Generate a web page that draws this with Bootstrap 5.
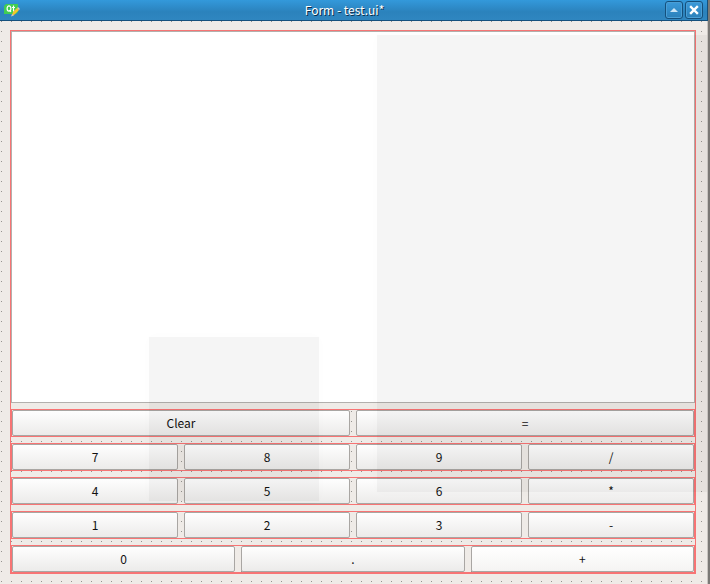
<!DOCTYPE html>
<html lang="en">
<head>
<meta charset="utf-8">
<meta name="viewport" content="width=device-width, initial-scale=1">
<title>Form - test.ui*</title>
<link href="https://cdn.jsdelivr.net/npm/bootstrap@5.3.0/dist/css/bootstrap.min.css" rel="stylesheet">
<style>
  body { font: 12px/18px "Noto Sans CJK SC", "Noto Sans", sans-serif; background: #efebe7; color: #111; }
  .frame-window { border-right: 2px solid #7b7976; }
  .titlebar { height: 21px; background: linear-gradient(#3399db, #2b82bc 60%, #2f86c0); border-bottom: 1px solid #15507c; border-right: 1px solid #15507c; }
  .caption-text { color: #fff; text-shadow: 1px 1px 0 #0b2c48; }
  .tools { gap: 2px; }
  .tool { width: 18px; height: 18px; padding: 0; border: 1px solid #15507c; border-radius: 3px; background: linear-gradient(#3b9ada, #2b80b9); box-shadow: inset 0 0 0 1px #4a9fd6; }
  .canvas { padding: 9px 11px 10px 10px; border-right: 1px solid #c9c5c1;
    background: conic-gradient(from 0deg at 1px 1px, transparent 270deg, #96938f 0) 1px 0 / 10px 10px; }
  .form-box { border: 1px solid #f77474; }
  .stack { gap: 6px; }
  .display { border: 1px solid #b3b0ad; border-radius: 0; background: #fff; resize: none; outline: 0; min-height: 100px; }
  .key-row { border: 1px solid #f77474; height: 28px; gap: 6px; }
  .key { flex: 1 1 0; min-width: 0; padding: 0; border: 1px solid #a9a6a3; border-radius: 2px; background: linear-gradient(#fefefe, #ecebea); color: #111; font: inherit; line-height: 24px; }
  .key-last { background: linear-gradient(#fff, #f5f4f3); }
  .shade { position: absolute; background: rgba(0, 0, 0, .04); box-shadow: 0 0 14px 4px rgba(60, 60, 0, .008); pointer-events: none; }
  .shade-right { left: 377px; right: 0; top: 14px; bottom: 92px; }
  .shade-low { left: 149px; width: 170px; top: 316px; bottom: 83px; }
</style>
<script src="https://cdn.jsdelivr.net/npm/bootstrap@5.3.0/dist/js/bootstrap.bundle.min.js"></script>
</head>
<body>
<div class="frame-window min-vh-100 d-flex flex-column">
  <header class="titlebar d-flex align-items-center flex-shrink-0 px-1">
    <svg width="16" height="16" viewBox="0 0 16 16" aria-hidden="true">
      <path d="M2 2h12v8l-2 2H0V4z" fill="#41cd52"/>
      <ellipse cx="5" cy="6.500" rx="1.900" ry="2.600" fill="none" stroke="#fff" stroke-width="1.200"/>
      <path d="M5.500 8L7 10M9.500 3.500v5q0 1 1.500 .8M8 5.500h3" fill="none" stroke="#fff" stroke-width="1.200"/>
      <path d="M8 13l1-3 4-4 2 2-5 5z" fill="#f7c42c"/>
      <path d="M13 6l1-1 2 2-1 1zM7 14.500l1-2.500 2 1.500z" fill="#d8cbb4"/>
    </svg>
    <div class="caption-text flex-fill text-center ps-1">Form - test.ui*</div>
    <div class="tools d-flex">
      <button class="tool d-flex align-items-center justify-content-center" type="button" aria-label="Shade"><svg width="10" height="10" viewBox="0 0 10 10"><path d="M1 7l4-4 4 4z" fill="#cde6f6"/></svg></button>
      <button class="tool d-flex align-items-center justify-content-center" type="button" aria-label="Close"><svg width="10" height="10" viewBox="0 0 10 10"><path d="M2 2l6 6M8 2l-6 6" stroke="#fff" stroke-width="2.400" stroke-linecap="square"/></svg></button>
    </div>
  </header>
  <main class="canvas position-relative flex-fill d-flex flex-column">
    <form class="form-box stack flex-fill d-flex flex-column">
      <textarea class="display w-100 d-block flex-fill" aria-label="Display"></textarea>
      <div class="key-row d-flex"><button class="key" type="button">Clear</button><button class="key" type="button">=</button></div>
      <div class="key-row d-flex"><button class="key" type="button">7</button><button class="key" type="button">8</button><button class="key" type="button">9</button><button class="key" type="button">/</button></div>
      <div class="key-row d-flex"><button class="key" type="button">4</button><button class="key" type="button">5</button><button class="key" type="button">6</button><button class="key" type="button">*</button></div>
      <div class="key-row d-flex"><button class="key" type="button">1</button><button class="key" type="button">2</button><button class="key" type="button">3</button><button class="key" type="button">-</button></div>
      <div class="key-row d-flex"><button class="key" type="button">0</button><button class="key" type="button">.</button><button class="key key-last" type="button">+</button></div>
    </form>
    <div class="shade shade-right"></div>
    <div class="shade shade-low"></div>
  </main>
</div>
</body>
</html>
